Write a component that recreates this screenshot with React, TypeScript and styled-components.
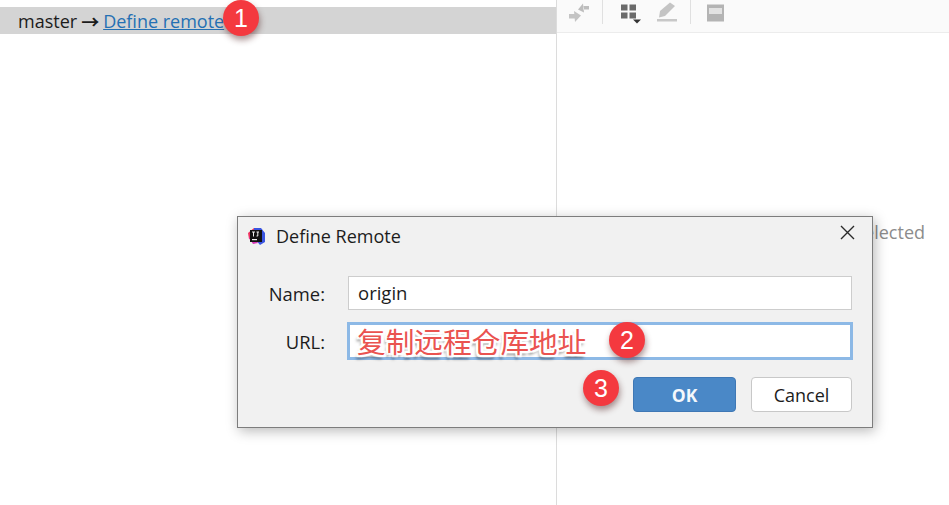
import styled, { createGlobalStyle } from "styled-components";

const GlobalStyle = createGlobalStyle`
  html, body {
    margin: 0;
    padding: 0;
    background: #fff;
    overflow: hidden;
  }
  body {
    font-family: "Open Sans", "Noto Sans", "Noto Sans CJK SC", sans-serif;
    color: #1c1c1c;
  }
`;

const Page = styled.div`
  position: relative;
  display: grid;
  grid-template-columns: 556px 1fr;
  width: 949px;
  height: 505px;
  overflow: hidden;
`;

const LeftPane = styled.div`
  padding-top: 7px;
`;

const BranchBar = styled.div`
  display: flex;
  align-items: center;
  gap: 4px;
  height: 27px;
  padding-left: 18px;
  background: #d4d4d4;
  font-size: 18px;
`;

const Arrow = styled.span`
  font-weight: 600;
`;

const Link = styled.a`
  color: #2470b3;
  text-decoration: underline;
`;

const RightPane = styled.div`
  display: flex;
  flex-direction: column;
  border-left: 1px solid #dcdcdc;
`;

const Toolbar = styled.div`
  display: flex;
  align-items: stretch;
  height: 33px;
  padding: 0 0 8px 10px;
  box-sizing: border-box;
  border-bottom: 1px solid #ececec;
  background: #fafafa;
`;

const ToolGroup = styled.div`
  display: flex;
  align-items: center;
  gap: 13px;
`;

const ToolbarDivider = styled.span`
  width: 1px;
  margin: 0 15px 0 11px;
  background: #e0e0e0;
`;

const EmptyNote = styled.div`
  padding: 187px 24px 0 0;
  text-align: right;
  font-size: 18px;
  color: #8c8c8c;
`;

const Dialog = styled.div`
  position: absolute;
  left: 237px;
  top: 216px;
  width: 636px;
  height: 212px;
  box-sizing: border-box;
  background: #f1f1f1;
  border: 1px solid #7d7d7d;
  box-shadow: 2px 3px 12px rgba(0, 0, 0, 0.28);
`;

const TitleBar = styled.div`
  display: flex;
  align-items: center;
  height: 38px;
  padding: 0 17px 0 8px;
  gap: 10px;
  font-size: 18px;
`;

const Title = styled.span`
  flex: 1;
`;

const CloseIcon = styled.svg`
  margin-bottom: 7px;
`;

const Form = styled.div`
  display: grid;
  grid-template-columns: 87px 1fr;
  column-gap: 23px;
  row-gap: 12px;
  align-items: center;
  padding: 21px 20px 0 0;
`;

const Label = styled.label`
  text-align: right;
  font-size: 18.4px;
`;

const NameField = styled.div`
  height: 34px;
  box-sizing: border-box;
  padding-left: 9px;
  line-height: 32px;
  background: #fff;
  border: 1px solid #cdcdcd;
  font-size: 18.5px;
`;

const UrlField = styled.div`
  display: flex;
  align-items: center;
  height: 38px;
  margin: 0 -1px;
  box-sizing: border-box;
  padding-left: 7px;
  background: #fff;
  border: 3px solid #8db9e6;
  color: #ea5350;
  font-size: 28.7px;
  line-height: 1;
  white-space: nowrap;
  text-shadow: 2px 0 1px #fff, -2px 0 1px #fff, 0 2px 1px #fff, 0 -2px 1px #fff,
    2px 2px 1px #fff, -2px 2px 1px #fff, 2px -2px 1px #fff, -2px -2px 1px #fff,
    -2px 4px 3px rgba(0, 0, 0, 0.5);
  font-family: "Noto Sans CJK SC", sans-serif;
`;

const Buttons = styled.div`
  display: flex;
  justify-content: flex-end;
  gap: 15px;
  padding: 17px 20px 0 0;
`;

const OkButton = styled.button`
  width: 103px;
  height: 35px;
  padding: 0;
  border: 1px solid #3f78b5;
  border-radius: 4px;
  background: #4a88c7;
  color: #f4f8fc;
  font: 700 17.5px "Open Sans", sans-serif;
`;

const CancelButton = styled.button`
  width: 101px;
  height: 35px;
  padding: 0;
  border: 1px solid #c8c8c8;
  border-radius: 4px;
  background: #fff;
  color: #1c1c1c;
  font: 400 18px "Open Sans", sans-serif;
`;

const Badge = styled.span<{ $x: number; $y: number }>`
  position: absolute;
  left: ${({ $x }) => $x - 18}px;
  top: ${({ $y }) => $y - 18}px;
  display: flex;
  align-items: center;
  justify-content: center;
  width: 36px;
  height: 36px;
  border-radius: 50%;
  background: #f4393f;
  color: #fff;
  font: 400 25px "Liberation Sans", sans-serif;
  box-shadow: 1px 4px 6px rgba(70, 20, 20, 0.45);
`;

const CloseButton = () => (
  <CloseIcon width="15" height="15" viewBox="0 0 15 15">
    <path d="M1 1L14 14M14 1L1 14" stroke="#2a2a2a" strokeWidth="1.4" fill="none" />
  </CloseIcon>
);

const AppLogo = () => (
  <svg width="20" height="20" viewBox="0 0 20 20">
    <path d="M2 7 L8 2 L12 6 L6 14 L3 13 Z" fill="#f0325f" />
    <path d="M8 2 H15 L19 7 V16 L14 19 L8 12 Z" fill="#3a55e0" />
    <path d="M3 12 L7 18 L12 17 L7 9 Z" fill="#d63ab5" />
    <rect x="4" y="4" width="12" height="12" fill="#111" />
    <rect x="6" y="13" width="5" height="1.2" fill="#eee" />
    <path d="M6 6H9M7.5 6V10.5M10.5 6H13M11.8 6V10H10.5" stroke="#eee" strokeWidth="1" fill="none" />
  </svg>
);

const CollapseIcon = () => (
  <svg width="24" height="24" viewBox="0 0 24 24">
    <path d="M16 3.5L11 9.5L17 12.5ZM16 6H22V9.5H16Z" fill="#bdbdbd" />
    <path d="M7 11L14 15.5L8 22ZM2 14H8V18.5H2Z" fill="#c4c4c4" />
  </svg>
);

const GroupIcon = () => (
  <svg width="24" height="24" viewBox="0 0 24 24">
    <path d="M3 4.5H9.5V10.5H3ZM11.5 4.5H18V10.5H11.5ZM3 12.5H9.5V18.5H3ZM11.5 12.5H18V18.5H11.5Z" fill="#6a6a6a" />
    <path d="M15 19.5H23L19 23.5Z" fill="#333" />
  </svg>
);

const EditIcon = () => (
  <svg width="24" height="24" viewBox="0 0 24 24">
    <path d="M15 2.5L20 6L10 16L4 17.5L5 11Z" fill="#c4c4c4" />
    <rect x="2" y="19" width="20" height="2.5" fill="#c8c8c8" />
  </svg>
);

const SaveIcon = () => (
  <svg width="19" height="24" viewBox="0 0 19 24">
    <path d="M1 4.5H18V21.5H1ZM3 8V14H16V8Z" fill="#b4b4b4" fillRule="evenodd" />
    <rect x="3" y="8" width="13" height="6" fill="#e2e2e2" />
  </svg>
);

export default function App() {
  return (
    <Page>
      <GlobalStyle />
      <LeftPane>
        <BranchBar>
          master <Arrow>→</Arrow> <Link>Define remote</Link>
        </BranchBar>
      </LeftPane>
      <RightPane>
        <Toolbar>
          <ToolGroup>
            <CollapseIcon />
          </ToolGroup>
          <ToolbarDivider />
          <ToolGroup>
            <GroupIcon />
            <EditIcon />
          </ToolGroup>
          <ToolbarDivider />
          <ToolGroup>
            <SaveIcon />
          </ToolGroup>
        </Toolbar>
        <EmptyNote>No changes selected</EmptyNote>
      </RightPane>
      <Dialog>
        <TitleBar>
          <AppLogo />
          <Title>Define Remote</Title>
          <CloseButton />
        </TitleBar>
        <Form>
          <Label>Name:</Label>
          <NameField>origin</NameField>
          <Label>URL:</Label>
          <UrlField>复制远程仓库地址</UrlField>
        </Form>
        <Buttons>
          <OkButton>OK</OkButton>
          <CancelButton>Cancel</CancelButton>
        </Buttons>
      </Dialog>
      <Badge $x={241} $y={18}>1</Badge>
      <Badge $x={627} $y={340}>2</Badge>
      <Badge $x={601} $y={388}>3</Badge>
    </Page>
  );
}
